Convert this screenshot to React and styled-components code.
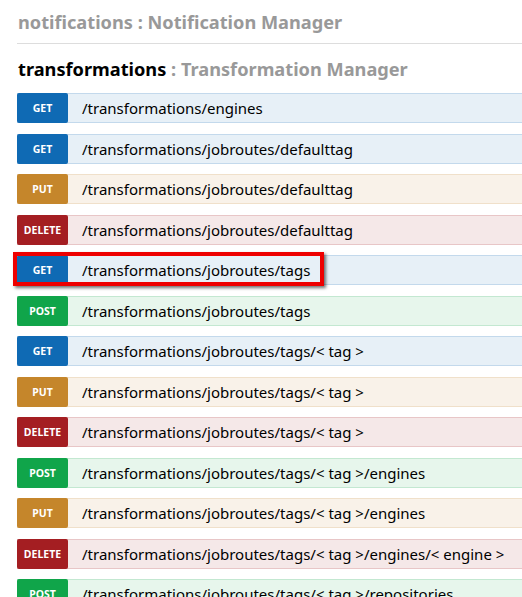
import React from "react";
import styled, { createGlobalStyle } from "styled-components";

const Global = createGlobalStyle`
  html, body { margin: 0; padding: 0; background: #fff; overflow: hidden; }
  body { font-family: "Noto Sans", "Open Sans", sans-serif; }
`;

const Page = styled.div`
  padding-left: 17px;
  width: 560px;
`;

const Resource = styled.div`
  border-bottom: ${(p) => (p.$divider ? "1px solid #ddd" : "none")};
  padding-top: ${(p) => p.$top}px;
  padding-bottom: ${(p) => p.$bottom}px;
`;

const Heading = styled.h2`
  margin: 0;
  padding-left: 1px;
  font-size: 18.2px;
  line-height: 24px;
  font-weight: 700;
  color: ${(p) => (p.$active ? "#000" : "#999")};
`;

const Desc = styled.span`
  color: #999;
`;

const List = styled.div`
  display: flex;
  flex-direction: column;
  gap: 10.5px;
`;

const COLORS = {
  GET: { label: "#0f6ab4", bg: "#e7f0f7", border: "#c3d9ec" },
  POST: { label: "#10a54a", bg: "#e7f6ec", border: "#c3e8d1" },
  PUT: { label: "#c5862b", bg: "#f9f2e9", border: "#f0e0ca" },
  DELETE: { label: "#a41e22", bg: "#f5e8e8", border: "#e8c6c7" },
};

const Row = styled.div`
  position: relative;
  display: flex;
  align-items: stretch;
  height: 30px;
  box-sizing: border-box;
  background: ${(p) => COLORS[p.$m].bg};
  border: 1px solid ${(p) => COLORS[p.$m].border};
  border-left: none;
  &::after {
    content: ${(p) => (p.$hl ? '""' : "none")};
    position: absolute;
    left: -4px;
    top: -4px;
    width: 311px;
    height: 34px;
    box-sizing: border-box;
    border: 4px solid #ee0000;
    box-shadow: 2px 2px 3px rgba(0, 0, 0, 0.55);
    pointer-events: none;
  }
`;

const Label = styled.span`
  width: 51px;
  margin: -1px 0;
  flex: none;
  display: flex;
  align-items: center;
  justify-content: center;
  background: ${(p) => COLORS[p.$m].label};
  color: #fff;
  border-radius: 2px;
  font-size: 10.5px;
  font-weight: 700;
`;

const Path = styled.span`
  display: flex;
  align-items: center;
  padding-left: 14px;
  font-size: 15px;
  color: #000;
  white-space: nowrap;
`;

const ops = [
  ["GET", "/transformations/engines"],
  ["GET", "/transformations/jobroutes/defaulttag"],
  ["PUT", "/transformations/jobroutes/defaulttag"],
  ["DELETE", "/transformations/jobroutes/defaulttag"],
  ["GET", "/transformations/jobroutes/tags", true],
  ["POST", "/transformations/jobroutes/tags"],
  ["GET", "/transformations/jobroutes/tags/< tag >"],
  ["PUT", "/transformations/jobroutes/tags/< tag >"],
  ["DELETE", "/transformations/jobroutes/tags/< tag >"],
  ["POST", "/transformations/jobroutes/tags/< tag >/engines"],
  ["PUT", "/transformations/jobroutes/tags/< tag >/engines"],
  ["DELETE", "/transformations/jobroutes/tags/< tag >/engines/< engine >"],
  ["POST", "/transformations/jobroutes/tags/< tag >/repositories"],
];

export default function App() {
  return (
    <>
      <Global />
      <Page>
        <Resource $divider $top={10} $bottom={9}>
          <Heading>
            notifications <Desc>: Notification Manager</Desc>
          </Heading>
        </Resource>
        <Resource $top={13} $bottom={12}>
          <Heading $active>
            transformations <Desc>: Transformation Manager</Desc>
          </Heading>
        </Resource>
        <List>
          {ops.map(([m, p, hl], i) => (
            <Row key={i} $m={m} $hl={hl}>
              <Label $m={m}>{m}</Label>
              <Path>{p}</Path>
            </Row>
          ))}
        </List>
      </Page>
    </>
  );
}
